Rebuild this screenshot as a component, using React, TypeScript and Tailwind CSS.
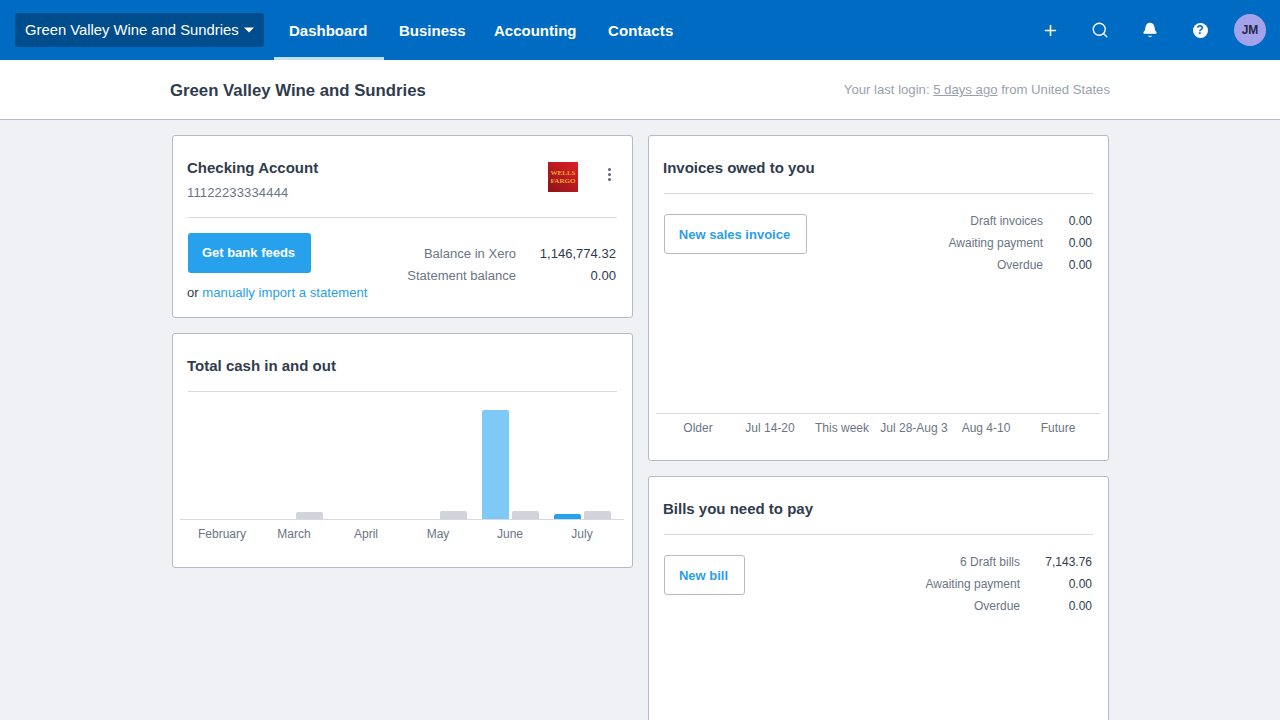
import { Bell, Search, Plus } from 'lucide-react';

const months = [
  { label: 'February', blue: 0, light: 0, gray: 0 },
  { label: 'March', blue: 0, light: 0, gray: 7 },
  { label: 'April', blue: 0, light: 0, gray: 0 },
  { label: 'May', blue: 0, light: 0, gray: 8 },
  { label: 'June', blue: 0, light: 109, gray: 8 },
  { label: 'July', blue: 5, light: 0, gray: 8 },
];

const weeks = ['Older', 'Jul 14-20', 'This week', 'Jul 28-Aug 3', 'Aug 4-10', 'Future'];

const Card = ({ className, children }: { className: string; children: React.ReactNode }) => (
  <div className={`bg-white border border-[#b5bac6] rounded-[3px] ${className}`}>{children}</div>
);

const CardTitle = ({ children }: { children: React.ReactNode }) => (
  <div className="h-[58px] mx-[15px] border-b border-[#d6d9de] pt-[21px] text-[15px] leading-[22px] font-bold text-[#303c4e]">
    <div className="-ml-px">{children}</div>
  </div>
);

// labels are right aligned against a fixed width value column
const Stats = ({ rows, valueWidth, size }: { rows: string[][]; valueWidth: string; size: string }) => (
  <div className={`grid grid-cols-[auto_auto] mr-px leading-[22px] ${size}`}>
    {rows.map(([label, value]) => (
      <div key={label} className="contents">
        <span className="text-right text-[#6b7585]">{label}</span>
        <span className={`${valueWidth} text-right text-[#303c4e]`}>{value}</span>
      </div>
    ))}
  </div>
);

export default function App() {
  return (
    <div className="h-[720px] overflow-hidden bg-[#eff1f4] font-['Liberation_Sans',Arial,sans-serif]">
      {/* Top nav */}
      <div className="h-[60px] bg-[#006bc2] flex items-center text-white">
        <div className="ml-[15px] w-[249px] h-[34px] rounded-[3px] bg-[#004d8d] flex items-center pl-[10px] pt-px text-[14.8px] mt-[-1px]">
          Green Valley Wine and Sundries
          <svg className="ml-[5px]" width="10" height="6" viewBox="0 0 10 6">
            <path d="M0 0.5h10L5 5.5z" fill="#fff" />
          </svg>
        </div>
        <div className="ml-[10px] flex h-full text-[15px] font-bold">
          <div className="w-[110px] pl-[15px] flex items-center border-b-[3px] border-[#bfe0f7] pt-[5px]">Dashboard</div>
          <div className="w-[95px] pl-[15px] flex items-center pt-[2px]">Business</div>
          <div className="w-[114px] pl-[15px] flex items-center pt-[2px]">Accounting</div>
          <div className="pl-[15px] flex items-center pt-[2px] tracking-[0.15px]">Contacts</div>
        </div>
        <div className="ml-auto mr-[14px] flex items-center">
          <div className="w-[50px] flex justify-center">
            <Plus size={17} strokeWidth={2.2} />
          </div>
          <div className="w-[50px] flex justify-center">
            <Search size={18} strokeWidth={1.8} />
          </div>
          <div className="w-[50px] flex justify-center">
            <Bell size={16} fill="#fff" strokeWidth={1.6} />
          </div>
          <div className="w-[50px] flex justify-center">
            <div className="w-[15px] h-[15px] rounded-full bg-white text-[#006bc2] text-[12px] leading-[15px] font-bold text-center">?</div>
          </div>
          <div className="ml-[9px] w-8 h-8 rounded-full bg-[#a5a2ec] text-[#1f2a44] text-[12px] font-bold flex items-center justify-center">JM</div>
        </div>
      </div>

      {/* Org header */}
      <div className="h-[60px] bg-white border-b border-[#b5bac6] flex items-center justify-between px-[170px] pt-[1px]">
        <div className="mt-[2px] text-[16.75px] font-bold text-[#303c4e]">Green Valley Wine and Sundries</div>
        <div className="text-[13.15px] text-[#9aa1ad]">
          Your last login: <span className="underline">5 days ago</span> from United States
        </div>
      </div>

      {/* Dashboard columns */}
      <div className="flex gap-[15px] pl-[172px] pt-[15px]">
        <div className="w-[461px] flex flex-col gap-[15px]">
          <Card className="h-[183px]">
            <div className="mx-[15px] h-[82px] border-b border-[#d6d9de] pt-[21px] flex">
              <div className="-ml-px">
                <div className="text-[15px] leading-[22px] font-bold text-[#303c4e]">Checking Account</div>
                <div className="mt-[4px] text-[13px] tracking-[0.15px] text-[#6b7585]">11122233334444</div>
              </div>
              <div className="ml-auto mt-[5px] w-[30px] h-[30px] bg-gradient-to-tr from-[#8c1419] to-[#e01f26] flex flex-col items-center justify-center text-[#f0a92c] text-[7px] leading-[8px] font-bold font-['Liberation_Serif',serif]">
                <span>WELLS</span>
                <span>FARGO</span>
              </div>
              <div className="ml-[30px] mr-[6px] mt-[11px] flex flex-col gap-[2px]">
                <span className="w-[3px] h-[3px] rounded-full bg-[#5c6678]" />
                <span className="w-[3px] h-[3px] rounded-full bg-[#5c6678]" />
                <span className="w-[3px] h-[3px] rounded-full bg-[#5c6678]" />
              </div>
            </div>
            <div className="mx-[15px] flex justify-between pt-[15px]">
              <div>
                <div className="w-[123px] h-[40px] rounded-[3px] bg-[#27a1ec] pr-[2px] text-white text-[13px] font-bold flex items-center justify-center">
                  Get bank feeds
                </div>
                <div className="-ml-px mt-[10px] text-[13.15px] text-[#303c4e]">
                  or <span className="text-[#2b9fe6]">manually import a statement</span>
                </div>
              </div>
              <div className="pt-[10px]">
                <Stats
                  size="text-[13.05px]"
                  valueWidth="w-[100px]"
                  rows={[
                    ['Balance in Xero', '1,146,774.32'],
                    ['Statement balance', '0.00'],
                  ]}
                />
              </div>
            </div>
          </Card>

          <Card className="h-[235px]">
            <CardTitle>Total cash in and out</CardTitle>
            <div className="ml-[7px] mr-[8px] h-[128px] border-b border-[#d6d9de] flex items-end pl-[6px]">
              {months.map((m) => (
                <div key={m.label} className="w-[72px] flex items-end gap-[3px] pl-[8px]">
                  <div className="w-[27px] flex flex-col justify-end">
                    {m.light > 0 && <div style={{ height: m.light }} className="rounded-t-[2px] bg-[#7fc9f6]" />}
                    {m.blue > 0 && <div style={{ height: m.blue }} className="rounded-t-[2px] bg-[#27a1ec]" />}
                  </div>
                  {m.gray > 0 && <div style={{ height: m.gray }} className="w-[27px] rounded-t-[2px] bg-[#d1d4da]" />}
                </div>
              ))}
            </div>
            <div className="mx-[7px] pl-[6px] pt-[6px] flex text-[12px] leading-[16px] text-[#6b7585]">
              {months.map((m) => (
                <div key={m.label} className="w-[72px] text-center">{m.label}</div>
              ))}
            </div>
          </Card>
        </div>

        <div className="w-[461px] flex flex-col gap-[15px]">
          <Card className="h-[326px]">
            <CardTitle>Invoices owed to you</CardTitle>
            <div className="mx-[15px] pt-[20px] flex justify-between h-[219px]">
              <div className="w-[143px] h-[40px] rounded-[3px] border border-[#b5bac6] pt-px pr-[2px] text-[#2b9fe6] text-[13px] font-bold flex items-center justify-center">
                New sales invoice
              </div>
              <div className="mt-[-4px]">
                <Stats
                  size="text-[12px]"
                  valueWidth="w-[49px]"
                  rows={[
                    ['Draft invoices', '0.00'],
                    ['Awaiting payment', '0.00'],
                    ['Overdue', '0.00'],
                  ]}
                />
              </div>
            </div>
            <div className="ml-[7px] mr-[8px] pl-[6px] border-t border-[#d6d9de] pt-[6px] flex text-[12px] leading-[16px] text-[#6b7585]">
              {weeks.map((w) => (
                <div key={w} className="w-[72px] text-center whitespace-nowrap">{w}</div>
              ))}
            </div>
          </Card>

          <Card className="h-[300px]">
            <CardTitle>Bills you need to pay</CardTitle>
            <div className="mx-[15px] pt-[20px] flex justify-between">
              <div className="w-[81px] h-[40px] rounded-[3px] border border-[#b5bac6] pt-px pr-[2px] text-[#2b9fe6] text-[13px] font-bold flex items-center justify-center">
                New bill
              </div>
              <div className="mt-[-4px]">
                <Stats
                  size="text-[12px]"
                  valueWidth="w-[72px]"
                  rows={[
                    ['6 Draft bills', '7,143.76'],
                    ['Awaiting payment', '0.00'],
                    ['Overdue', '0.00'],
                  ]}
                />
              </div>
            </div>
          </Card>
        </div>
      </div>
    </div>
  );
}
